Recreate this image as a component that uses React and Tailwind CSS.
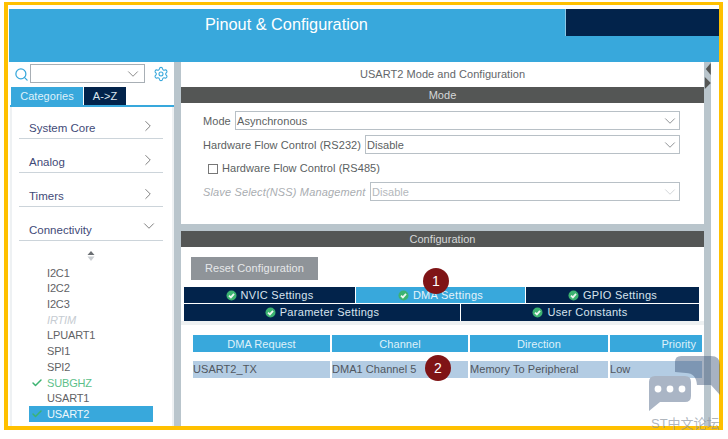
import React from "react";
import { Search, ChevronDown, ChevronRight, Settings, Check } from "lucide-react";

const Tick = () => (
  <svg width="11" height="11" viewBox="0 0 11 11" className="shrink-0">
    <circle cx="5.5" cy="5.5" r="5" fill="#3cb371" />
    <path d="M3 5.6 L4.9 7.4 L8 3.9" fill="none" stroke="#eef6f1" strokeWidth="1.8" />
  </svg>
);

const Select = ({ value, disabled, className }) => (
  <div className={`h-[19px] flex items-center justify-between border border-[#b8c0c6] pl-[1px] ${disabled ? "text-[#b4b8bc]" : "text-[#5c5f62]"} ${className}`}>
    <span className="pt-[1px]">{value}</span>
    <ChevronDown size={18} strokeWidth={1} className={disabled ? "text-[#c4c8cc]" : "text-[#6b6f73]"} />
  </div>
);

const Category = ({ label, open, className }) => (
  <div className={`mx-[7px] w-[144px] shrink-0 border-b-[1.5px] border-[#ccd4da] flex items-end justify-between pb-[2px] pl-[10px] pr-[6px] text-[11.5px] tracking-normal text-[#3f4a78] ${className}`}>
    <span className="leading-[16px]">{label}</span>
    {open ? <ChevronDown size={18} strokeWidth={1} className="text-[#555] mb-[3px] -mr-[1px]" /> : <ChevronRight size={18} strokeWidth={1} className="text-[#555] mb-[1px]" />}
  </div>
);

const Item = ({ label, kind }) => (
  <div className={`h-[15.7px] w-[124px] flex items-center leading-[16px] pl-[18px] relative text-[11px] tracking-[-0.15px] ${kind === "sel" ? "bg-[#38a8dc] text-[#eef7fb]" : kind === "ok" ? "text-[#5cbf8a]" : kind === "off" ? "text-[#c6ccd2] italic" : "text-[#5f6265]"}`}>
    {(kind === "ok" || kind === "sel") && <Check size={12} strokeWidth={3} className="absolute left-[2px] top-[2px] text-[#3cb371]" />}
    {label}
  </div>
);

const Tab = ({ label, active, className }) => (
  <div className={`flex items-center justify-center gap-[4px] tracking-[0.3px] ${active ? "bg-[#38a8dc] text-[#e4f3fa]" : "bg-[#02234b] text-[#d8e4ee]"} ${className}`}>
    <Tick />
    <span>{label}</span>
  </div>
);

const Head = ({ label, className }) => (
  <div className={`bg-[#38a8dc] text-[#dff1fa] h-[17px] flex items-center justify-center pt-[1px] ${className}`}>{label}</div>
);

const Cell = ({ children }) => (
  <div className="bg-[#b3cce3] h-[17px] flex items-center text-[#50565e] whitespace-nowrap">{children}</div>
);

const Badge = ({ n, className }) => (
  <div className={`absolute w-[26px] h-[26px] rounded-full bg-[#7f1416] text-white text-[14px] tracking-normal flex items-center justify-center ${className}`}>{n}</div>
);

export default function App() {
  return (
    <div className="relative w-[728px] h-[439px] bg-white overflow-hidden text-[11px] tracking-[0.05px] font-['Liberation_Sans',Arial,sans-serif]">
      <div className="ml-[4px] mt-[2px] w-[719px] h-[428px] border-[#ffc000] border-l-[4px] border-r-[4px] border-t-[3px] border-b-[4px] pt-[4px] pl-[1px] flex flex-col overflow-hidden">
        <header className="h-[53px] bg-[#38a8dc] flex justify-between items-start shrink-0">
          <div className="pl-[196px] pt-[5px] text-[16.3px] leading-[20px] tracking-normal text-white">Pinout &amp; Configuration</div>
          <div className="w-[154px] h-[27px] bg-[#02234b] border-l border-[#8cc8e6]" />
        </header>

        <div className="flex flex-1 min-h-0">
          <aside className="w-[165px] shrink-0 flex flex-col bg-white overflow-hidden">
            <div className="h-[25px] shrink-0 flex items-start pl-[5px] pt-[2px]">
              <Search size={15} strokeWidth={2} className="text-[#38a8dc] shrink-0 mt-[3px]" />
              <div className="ml-[1px] w-[115px] h-[19px] border border-[#a8afb5] flex justify-end items-center pr-[2px]">
                <ChevronDown size={18} strokeWidth={1} className="text-[#666]" />
              </div>
              <Settings size={16} strokeWidth={1.6} className="ml-[8px] mt-[2px] text-[#38a8dc]" />
            </div>
            <div className="flex pl-[2px] h-[18px] shrink-0">
              <div className="w-[72px] bg-[#38a8dc] text-[#dff1fa] flex items-center justify-center">Categories</div>
              <div className="ml-[1px] w-[42px] bg-[#02234b] text-[#dbe6ef] flex items-center justify-center">A-&gt;Z</div>
            </div>
            <div className="ml-[1px] h-[2px] shrink-0 bg-[#38a8dc]" />
            <div className="flex-1 min-h-0 ml-[1px] bg-white border-l-[2px] border-r-[2px] border-[#eef1f3] flex flex-col">
              <Category label="System Core" className="h-[31.5px]" />
              <Category label="Analog" className="h-[34.3px]" />
              <Category label="Timers" className="h-[34.3px]" />
              <Category label="Connectivity" open className="h-[34.3px]" />
              <div className="flex justify-center pt-[10px] pb-[3.5px] pr-[2px] shrink-0">
                <svg width="8" height="10" viewBox="0 0 8 10" className="block">
                  <path d="M4 0 L7.5 4 H0.5 Z" fill="#6b6f73" />
                  <path d="M4 10 L7.5 5.5 H0.5 Z" fill="#c9cdd1" />
                </svg>
              </div>
              <div className="ml-[17px] shrink-0">
                <Item label="I2C1" />
                <Item label="I2C2" />
                <Item label="I2C3" />
                <Item label="IRTIM" kind="off" />
                <Item label="LPUART1" />
                <Item label="SPI1" />
                <Item label="SPI2" />
                <Item label="SUBGHZ" kind="ok" />
                <Item label="USART1" />
                <Item label="USART2" kind="sel" />
              </div>
            </div>
          </aside>

          <div className="w-[7px] shrink-0 bg-[#b9c5cc]" />

          <main className="w-[523px] shrink-0 flex flex-col bg-white">
            <section className="h-[162px] shrink-0 flex flex-col">
              <div className="h-[24.5px] shrink-0 flex items-center justify-center text-[#63666a]">USART2 Mode and Configuration</div>
              <div className="h-[16px] shrink-0 bg-[#545655] text-[#d6d8d8] flex items-center justify-center pt-[1px]">Mode</div>
              <div className="pl-[22px] text-[#5c5f62] flex flex-col pt-[8.5px]">
                <div className="flex items-center h-[19px]">
                  <span className="w-[32px] pt-[1px]">Mode</span>
                  <Select value="Asynchronous" className="w-[445px]" />
                </div>
                <div className="flex items-center h-[19px] mt-[5px]">
                  <span className="w-[162px] whitespace-nowrap pt-[1px]">Hardware Flow Control (RS232)</span>
                  <Select value="Disable" className="w-[315px]" />
                </div>
                <div className="flex items-center h-[19px] mt-[5px] pl-[5px]">
                  <div className="w-[10px] h-[10px] border border-[#777] mr-[4px]" />
                  <span>Hardware Flow Control (RS485)</span>
                </div>
                <div className="flex items-center h-[19px] mt-[4px]">
                  <span className="w-[167px] whitespace-nowrap italic text-[#a9adb1] tracking-[0.15px] pt-[1px]">Slave Select(NSS) Management</span>
                  <Select value="Disable" disabled className="w-[310px]" />
                </div>
              </div>
            </section>
            <div className="h-[7px] shrink-0 bg-[#b9c5cc]" />
            <section className="flex-1 min-h-0 flex flex-col">
              <div className="h-[16px] shrink-0 bg-[#545655] text-[#d6d8d8] flex items-center justify-center pt-[1px]">Configuration</div>
              <div className="pl-[10px] pt-[10px] shrink-0">
                <div className="w-[127px] h-[23px] bg-[#8f9499] text-[#e6e8ea] tracking-[0.1px] flex items-center justify-center">Reset Configuration</div>
              </div>
              <div className="ml-[3px] w-[515px] mt-[7px] flex flex-col gap-[1px] shrink-0">
                <div className="flex h-[16px] gap-[1px]">
                  <Tab label="NVIC Settings" className="w-[171px] pt-[1px]" />
                  <Tab label="DMA Settings" active className="w-[169px] pt-[1px]" />
                  <Tab label="GPIO Settings" className="w-[173px] pt-[1px]" />
                </div>
                <div className="flex h-[17px] gap-[1px]">
                  <Tab label="Parameter Settings" className="w-[276px]" />
                  <Tab label="User Constants" className="w-[238px]" />
                </div>
              </div>
              <div className="h-[4px] w-[523px] shrink-0 bg-[#eef1f2]" />
              <div className="ml-[12px] mt-[10px] w-[511px] grid grid-cols-[137px_136px_138px_92px] gap-x-[2px] gap-y-[9px] shrink-0">
                <Head label="DMA Request" />
                <Head label="Channel" />
                <Head label="Direction" />
                <Head label="Priority" className="justify-end pr-[6px]" />
                <Cell>USART2_TX</Cell>
                <Cell>DMA1 Channel 5</Cell>
                <Cell>Memory To Peripheral</Cell>
                <Cell>Low</Cell>
              </div>
            </section>
          </main>

          <div className="w-[7px] shrink-0 bg-[#b9c5cc] relative">
            <svg width="7" height="28" viewBox="0 0 7 28" className="absolute left-0 top-[1px]">
              <path d="M6.8 0 L1.8 6 L6.8 12 Z" fill="#545655" />
              <path d="M0.8 14 L6.8 20 L0.8 26 Z" fill="#545655" />
            </svg>
          </div>
          <div className="flex-1 bg-white" />
        </div>
      </div>

      <Badge n="1" className="left-[423px] top-[268px]" />
      <Badge n="2" className="left-[425px] top-[355px]" />

      <svg width="74" height="58" viewBox="648 354 74 58" className="absolute left-[648px] top-[354px]">
        <path d="M681 356 H711 Q720 356 720 365 V395 L711 385 H697 Q696 373 686 373 L675 372 V362 Q675 356 681 356 Z" fill="rgb(60,84,120)" fillOpacity="0.45" />
        <path d="M655 376 H685 Q691 376 691 382 V396 Q691 402 685 402 H660 L649 411 V382 Q649 376 655 376 Z" fill="#aab5c5" />
        <circle cx="658" cy="389" r="3.4" fill="#fff" />
        <circle cx="670" cy="389" r="3.4" fill="#fff" />
        <circle cx="682" cy="389" r="3.4" fill="#fff" />
      </svg>
      <div className="absolute left-[651px] top-[415px] text-[13px] leading-[17px] tracking-normal whitespace-nowrap text-[#8c95a0]/70 font-['Liberation_Sans','Noto_Sans_CJK_SC',sans-serif]">ST中文论坛</div>
    </div>
  );
}
